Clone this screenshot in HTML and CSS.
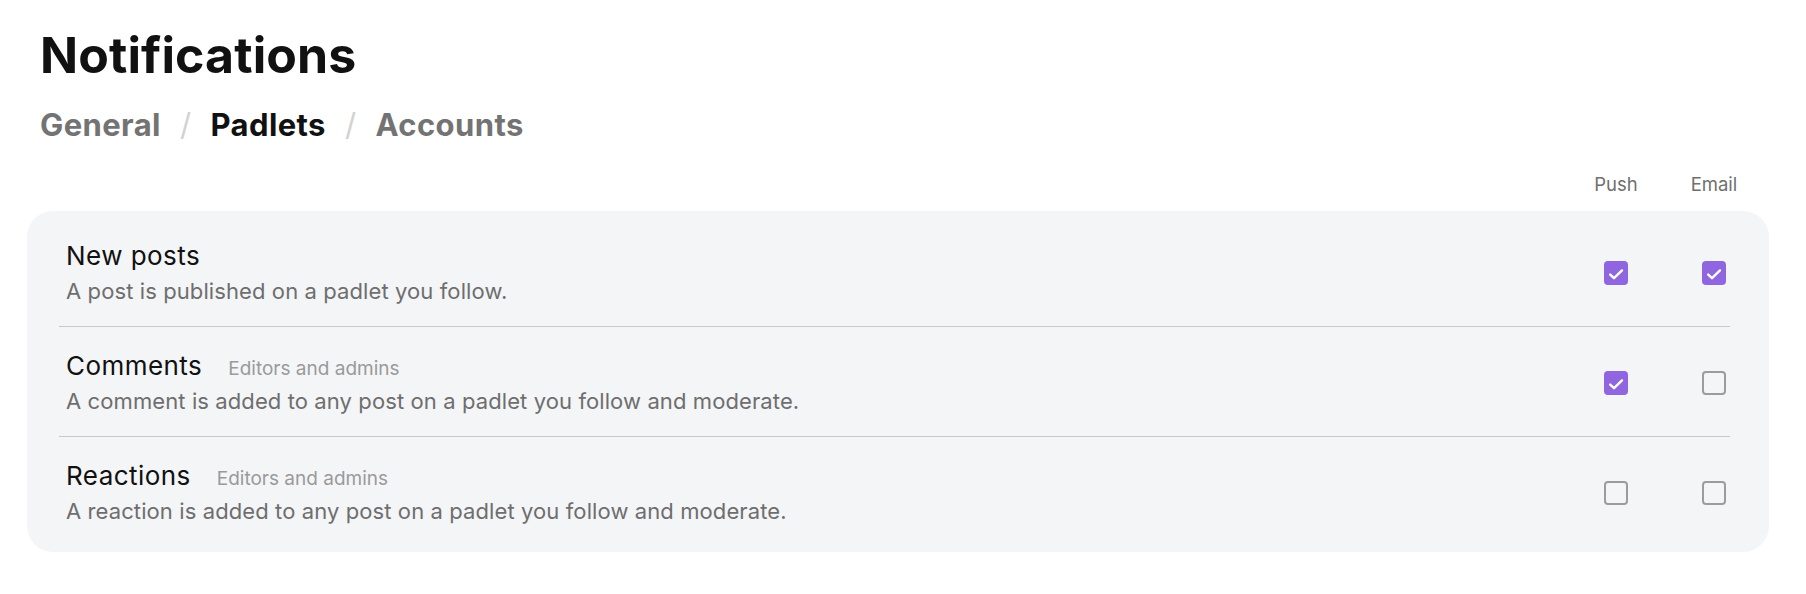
FILE: index.html
```html
<!DOCTYPE html>
<html lang="en">
<head>
<meta charset="utf-8">
<title>Notifications</title>
<link rel="stylesheet" href="styles.css">
</head>
<body>
<div class="page">
  <h1 class="title">Notifications</h1>
  <nav class="tabs">
    <span class="tab">General</span>
    <span class="sep">/</span>
    <span class="tab active">Padlets</span>
    <span class="sep">/</span>
    <span class="tab">Accounts</span>
  </nav>
  <div class="panel">
    <div class="col-head">
      <span class="cell">Push</span>
      <span class="cell">Email</span>
    </div>
    <div class="card">
      <div class="row">
        <div class="info">
          <div class="row-title"><span class="name">New posts</span></div>
          <div class="desc">A post is published on a padlet you follow.</div>
        </div>
        <div class="controls">
          <span class="cell"><span class="box checked"><svg viewBox="0 0 24 24"><path d="M6.2 13.6 L10 17.2 L18 9.4"/></svg></span></span>
          <span class="cell"><span class="box checked"><svg viewBox="0 0 24 24"><path d="M6.2 13.6 L10 17.2 L18 9.4"/></svg></span></span>
        </div>
      </div>
      <div class="row">
        <div class="info">
          <div class="row-title"><span class="name">Comments</span><span class="hint">Editors and admins</span></div>
          <div class="desc">A comment is added to any post on a padlet you follow and moderate.</div>
        </div>
        <div class="controls">
          <span class="cell"><span class="box checked"><svg viewBox="0 0 24 24"><path d="M6.2 13.6 L10 17.2 L18 9.4"/></svg></span></span>
          <span class="cell"><span class="box"></span></span>
        </div>
      </div>
      <div class="row">
        <div class="info">
          <div class="row-title"><span class="name">Reactions</span><span class="hint">Editors and admins</span></div>
          <div class="desc">A reaction is added to any post on a padlet you follow and moderate.</div>
        </div>
        <div class="controls">
          <span class="cell"><span class="box"></span></span>
          <span class="cell"><span class="box"></span></span>
        </div>
      </div>
    </div>
  </div>
</div>
</body>
</html>
```
FILE: styles.css
```css
* { box-sizing: border-box; }
html, body { margin: 0; background: #ffffff; }
body {
  font-family: Inter, "Noto Sans", "Liberation Sans", sans-serif;
  color: #111111;
}
.page { padding-top: 25px; }
.title {
  margin: 0 0 0 40px;
  font-size: 50px;
  line-height: 60px;
  font-weight: 700;
  color: #111111;
  letter-spacing: 0.1px;
}
.tabs {
  display: flex;
  align-items: baseline;
  margin-top: 22px;
  padding-left: 40px;
  font-size: 31px;
  line-height: 36px;
  font-weight: 700;
  letter-spacing: 0.4px;
}
.tab { color: #737373; }
.tab.active { color: #111111; }
.sep {
  color: #d2d2d2;
  font-weight: 400;
  margin: 0 19px;
}
.panel { margin: 0 37px 0 27px; }
.col-head {
  display: flex;
  justify-content: flex-end;
  gap: 66px;
  margin-top: 29px;
  padding-right: 39px;
  font-size: 18.5px;
  line-height: 24px;
  color: #6f6f6f;
}
.cell {
  width: 32px;
  display: flex;
  justify-content: center;
  align-items: center;
  white-space: nowrap;
}
.card {
  margin-top: 15px;
  background: #f4f5f7;
  border-radius: 26px;
  padding: 6px 39px 6px 32px;
}
.row {
  display: flex;
  align-items: center;
  justify-content: space-between;
  padding: 23px 0 20px 7px;
  border-bottom: 1px solid #c9c9cb;
}
.row:last-child { border-bottom: none; }
.row-title {
  display: flex;
  align-items: baseline;
  height: 32px;
  line-height: 32px;
}
.name { font-size: 26px; letter-spacing: 0.45px; color: #111111; }
.hint {
  font-size: 19px;
  line-height: 20px;
  color: #9a9a9a;
  margin-left: 26px;
}
.desc {
  margin-top: 4px;
  font-size: 22px;
  line-height: 30px;
  letter-spacing: 0.1px;
  color: #6e6e6e;
}
.controls { display: flex; gap: 66px; }
.box {
  width: 24px;
  height: 24px;
  border: 2.3px solid #9c9c9c;
  border-radius: 4px;
  display: flex;
}
.box.checked {
  border: none;
  background: #8f66e0;
}
.box svg {
  width: 24px;
  height: 24px;
  fill: none;
  stroke: #ffffff;
  stroke-width: 2.4;
  stroke-linecap: round;
  stroke-linejoin: round;
}
```
